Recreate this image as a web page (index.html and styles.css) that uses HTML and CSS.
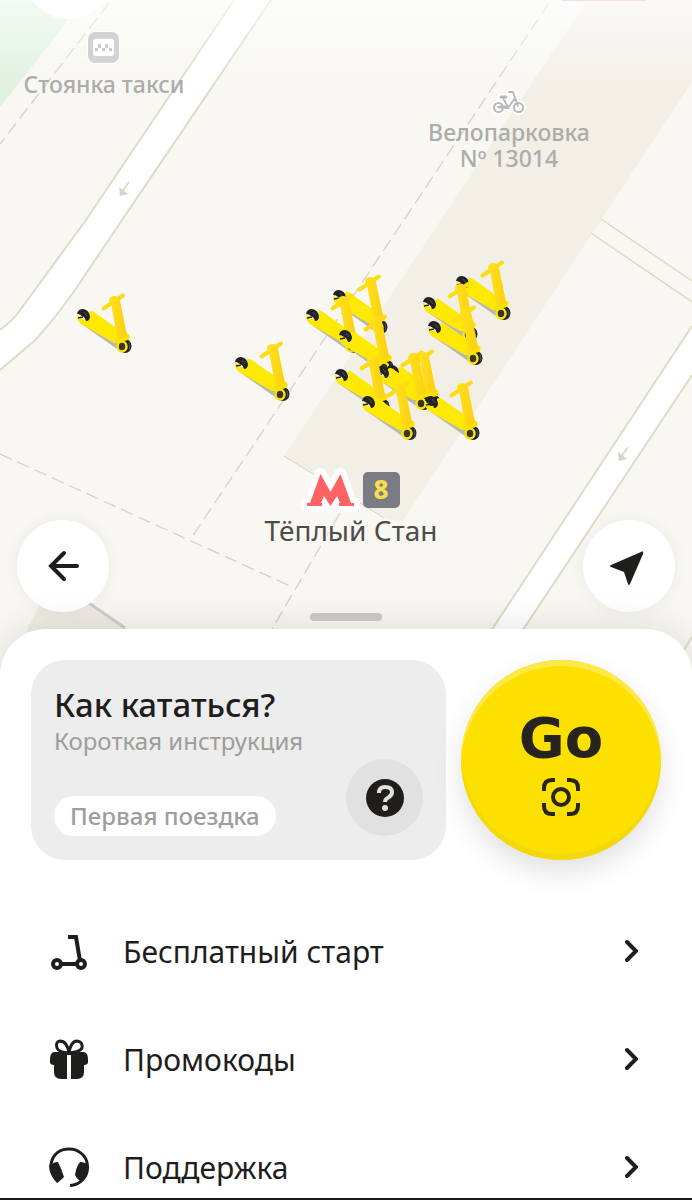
FILE: index.html
```html
<!DOCTYPE html>
<html lang="ru">
<head>
<meta charset="UTF-8">
<meta name="viewport" content="width=device-width, initial-scale=1.0">
<title>Самокаты</title>
<link rel="stylesheet" href="styles.css">
</head>
<body>
<main class="app">
  <section class="map">
    <svg class="map-canvas" viewBox="0 0 692 675" role="img" aria-label="Карта самокатов">
      <defs>
        <linearGradient id="fade" x1="0" y1="0" x2="0" y2="1">
          <stop offset="0" stop-color="#fff" stop-opacity="0.65"/>
          <stop offset="1" stop-color="#fff" stop-opacity="0"/>
        </linearGradient>
        <linearGradient id="stem" x1="0" y1="0" x2="1" y2="0">
          <stop offset="0" stop-color="#ffe21a"/>
          <stop offset="1" stop-color="#fccf12"/>
        </linearGradient>
        <g id="scooter">
          <path d="M3 33L40 59L46 60L46 54L10 28Z" fill="#b9b8b0"/>
          <path d="M0 25Q3 26 5 29L11 29L12 22Q14 20 17 22L38 37L51 44Q54 47 51 50L40 53L37 53L4 34Q0 31 0 25Z" fill="#fdea00"/>
          <!-- rear wheel -->
          <path d="M0 24Q1 19 6 19Q12 20 13 26Q13 31 9 31Q8 27 5 26Q3 24 0 24Z" fill="#222"/>
          <path d="M1 28L6 27" stroke="#222" stroke-width="1.500"/>
          <path d="M7 22L10 26" stroke="#55534a"/>
          <!-- front wheel -->
          <ellipse cx="48" cy="56" rx="6.500" ry="7" fill="#222"/>
          <ellipse cx="45" cy="56.500" rx="4.500" ry="5" fill="#3a3718" stroke="#f8e416" stroke-width="2.500"/>
          <path d="M52 52L53 60" stroke="#55534a"/>
          <!-- stem and handlebar -->
          <path d="M26.500 18.500L46 5.500" stroke="#fddc14" stroke-width="4" stroke-linecap="round"/>
          <path d="M32 11Q32 6 38 6Q43 7 43 11L50 45Q51 50 46 50Q41 51 40 46L34 14Z" fill="url(#stem)"/>
          <path d="M38 48Q45 51 52 44Q54 51 47 51Q42 53 38 51Z" fill="#fde000"/>
        </g>
        <g id="arrow">
          <path d="M129 182L122 192" stroke="#d9d5c3" stroke-width="1.500"/>
          <path d="M119 187L120 196L128 194Z" fill="#d9d5c3"/>
        </g>
      </defs>

      <rect width="692" height="675" fill="#f8f7f1"/>
      <path d="M0 0H84L0 107Z" fill="#dff1df"/>

      <!-- buildings -->
      <path d="M587 0H692V82L402 522L384 518L284 456Z" fill="#f2efe7"/>
      <path d="M26 632L42 600H84L128 632Z" fill="#eeece3"/>
      <path d="M86 601L125 628" stroke="#cfcec8" stroke-width="3"/>
      <path d="M284 456L384 518" stroke="#d5d2c8"/>

      <!-- roads -->
      <path d="M234 0L86 220L18 313Q12 321 0 330V370L33 342Q50 325 75 290L122 220L271 0Z" fill="#fff"/>
      <path d="M692 326L462 675H493L692 375Z" fill="#fff"/>
      <g fill="none" stroke="#dedbc9" stroke-width="2">
        <path d="M234 0L86 220L18 313Q12 321 0 330"/>
        <path d="M271 0L122 220L75 290Q50 325 33 342L0 370"/>
        <path d="M692 326L462 675M692 375L493 675"/>
        <path d="M692 637L668 675"/>
      </g>
      <path d="M601 219L692 281M591 233L692 302" fill="none" stroke="#dedbc9" stroke-width="1.500"/>
      <g fill="none" stroke="#d3d2cc" stroke-width="1.300" stroke-dasharray="13 6">
        <path d="M109 3L0 144"/>
        <path d="M549 3L190 540"/>
        <path d="M0 454L290 586"/>
        <path d="M340 513L245 675"/>
      </g>
      <use href="#arrow"/>
      <use href="#arrow" x="499" y="265"/>
      <rect width="692" height="90" fill="url(#fade)"/>
      <rect x="562" width="84" height="1" fill="#f3dcf0"/>
      <circle cx="69" cy="-27" r="46" fill="#fff"/>

      <!-- taxi rank -->
      <rect x="87" y="31" width="33" height="33" rx="8" fill="#fff"/>
      <rect x="88" y="32" width="31" height="31" rx="7" fill="#d3d3d3"/>
      <rect x="93" y="39" width="21" height="17" rx="3" fill="#fff"/>
      <path d="M95 48h3v3h-3zM98 44h3v4h-3zM102 48h3v3h-3zM105 44h3v4h-3zM109 48h3v3h-3z" fill="#cdcdcd"/>
      <text class="place" x="104" y="93">Стоянка такси</text>

      <!-- bike parking -->
      <g fill="none" stroke-linecap="round" stroke-linejoin="round">
        <g stroke="#fff" stroke-width="6">
          <circle cx="498.500" cy="107.500" r="4.500"/>
          <circle cx="518.500" cy="107.500" r="4.500"/>
          <path d="M498 107L508 108L515 98L513 92H509M508 107L503 98M500 97H506M515 98L518 106"/>
        </g>
        <g stroke="#b9b9b9" stroke-width="2">
          <circle cx="498.500" cy="107.500" r="4.500"/>
          <circle cx="518.500" cy="107.500" r="4.500"/>
          <path d="M498 107L508 108L515 98L513 92H509M508 107L503 98M515 98L518 106"/>
          <path d="M501 97H506M500 107L508 107" stroke-width="3"/>
        </g>
      </g>
      <text class="place" x="509" y="141">Велопарковка<tspan x="509" dy="26">Nº 13014</tspan></text>

      <!-- scooters -->
      <use href="#scooter" x="77" y="290"/>
      <use href="#scooter" x="235" y="338"/>
      <use href="#scooter" x="456" y="257"/>
      <use href="#scooter" x="333" y="271"/>
      <use href="#scooter" x="423" y="278"/>
      <use href="#scooter" x="306" y="290"/>
      <use href="#scooter" x="428" y="302"/>
      <use href="#scooter" x="339" y="311"/>
      <use href="#scooter" x="386" y="346"/>
      <use href="#scooter" x="376" y="347"/>
      <use href="#scooter" x="335" y="350"/>
      <use href="#scooter" x="425" y="377"/>
      <use href="#scooter" x="362" y="377"/>

      <!-- metro station -->
      <path d="M307 506V503H310L320.500 474L330.500 492L340.500 474L351 503H354V506H339V503H340L337 496L330.500 506L324 496L321 503H322V506Z" fill="#ff6262" stroke="#fff" stroke-width="12" stroke-linejoin="round" paint-order="stroke"/>
      <rect x="363" y="472" width="37" height="36" rx="5" fill="#7a7b83"/>
      <text class="line-number" x="381" y="499">8</text>
      <text class="station" x="351" y="541">Тёплый Стан</text>
    </svg>

    <div class="map-controls">
      <button class="round-btn" type="button" aria-label="Назад">
        <svg width="32" height="32" viewBox="0 0 32 32" fill="none" stroke="#1f1e1c" stroke-width="4" stroke-linecap="round"><path d="M30 16H5M17 3L4 16L17 29"/></svg>
      </button>
      <button class="round-btn" type="button" aria-label="Моё местоположение">
        <svg width="40" height="40" viewBox="0 0 40 40"><path d="M2 19L32 6Q35 4 34 8L21 38Q20 40 19 38L15 26L2 21Q0 20 2 19Z" fill="#1f1e1c"/></svg>
      </button>
    </div>
  </section>

  <section class="sheet">
    <div class="handle"></div>
    <div class="actions">
      <button class="guide" type="button">
        <span class="guide-title">Как кататься?</span>
        <span class="guide-text">Короткая инструкция</span>
        <span class="guide-footer">
          <span class="tag">Первая поездка</span>
          <span class="help">
            <svg width="40" height="40" viewBox="0 0 40 40"><circle cx="20" cy="20" r="19" fill="#1f1e1c"/><path d="M14 15Q14 9 20 9Q27 9 27 14Q27 17 24 19Q20 21 20 24" fill="none" stroke="#e1e1e1" stroke-width="4"/><circle cx="20" cy="30" r="3" fill="#e1e1e1"/></svg>
          </span>
        </span>
      </button>
      <button class="go" type="button">
        <span class="go-text">Go</span>
        <svg width="40" height="40" viewBox="0 0 40 40" fill="none" stroke="#26241c" stroke-width="4"><circle cx="20" cy="20" r="8"/><path d="M3 14V11Q3 3 11 3H14M26 3H29Q37 3 37 11V14M37 26V29Q37 37 29 37H26M14 37H11Q3 37 3 29V26"/></svg>
      </button>
    </div>

    <nav class="menu">
      <a class="menu-item" href="#start">
        <svg class="menu-icon" viewBox="0 0 40 40" fill="none" stroke="#1f1e1c"><g stroke-width="4"><path d="M19 6H27L31 30"/><path d="M12 33H28"/></g><circle cx="8" cy="33" r="4" stroke-width="4"/><circle cx="32" cy="33" r="4" stroke-width="4"/></svg>
        <span class="menu-label">Бесплатный старт</span>
        <svg class="chevron" viewBox="0 0 14 24"><path d="M3 3L12 12L3 21"/></svg>
      </a>
      <a class="menu-item" href="#promo">
        <svg class="menu-icon" viewBox="0 0 40 40"><path d="M20 14Q18 2 11 2Q6 3 8 9Q9 13 20 14Q31 13 33 9Q34 3 28 2Q22 2 20 14Z" fill="none" stroke="#1f1e1c" stroke-width="3"/><path d="M5 13H35Q39 14 39 20V23Q39 26 35 26V33Q35 40 28 40H22V16H18V40H12Q5 40 5 33V26Q1 26 1 23V20Q1 14 5 13Z" fill="#1f1e1c"/></svg>
        <span class="menu-label">Промокоды</span>
        <svg class="chevron" viewBox="0 0 14 24"><path d="M3 3L12 12L3 21"/></svg>
      </a>
      <a class="menu-item" href="#support">
        <svg class="menu-icon" viewBox="0 0 40 40"><path d="M7 32C2 26 1 21 2 17C4 7 11 2 20 2C30 2 38 9 38.500 19C39 30 31 38 21 38.500" fill="none" stroke="#1f1e1c" stroke-width="3"/><path d="M2 18Q4 15 9 15Q12 21 15 30Q10 35 8 36Q2 30 1 22Z" fill="#1f1e1c"/><path d="M39 18Q36 15 31 15Q27 20 26 28Q27 31 31 34L37 30Q40 24 39 18Z" fill="#1f1e1c"/></svg>
        <span class="menu-label">Поддержка</span>
        <svg class="chevron" viewBox="0 0 14 24"><path d="M3 3L12 12L3 21"/></svg>
      </a>
    </nav>
  </section>
</main>
</body>
</html>
```
FILE: styles.css
```css
* {
  box-sizing: border-box;
}
body {
  margin: 0;
  background-color: #fff;
  color: #1f1e1c;
  font-family: "Noto Sans", sans-serif;
}
button {
  border: 0;
  padding: 0;
  font: inherit;
  color: inherit;
  cursor: pointer;
}
svg {
  display: block;
}
.app {
  height: 100vh;
  overflow: hidden;
  border-bottom: 2px solid #1a1a1a;
}

/* Map */
.map {
  position: relative;
}
.map-canvas {
  width: 100%;
  height: auto;
}
.map-canvas text {
  text-anchor: middle;
}
.place {
  font-size: 23px;
  font-weight: 500;
  fill: #acacaa;
}
.station {
  font-size: 28px;
  fill: #4c4c4c;
  stroke: #f8f7f1;
  stroke-width: 3px;
  paint-order: stroke;
}
.line-number {
  font-size: 26px;
  font-weight: 800;
  fill: #f5df4d;
}
.map-controls {
  position: absolute;
  left: 0;
  right: 0;
  bottom: 63px;
  display: flex;
  justify-content: space-between;
  padding: 0 17px;
}
.round-btn {
  display: flex;
  align-items: center;
  justify-content: center;
  width: 92px;
  height: 92px;
  border-radius: 50%;
  background-color: #fff;
  box-shadow: 0 0 16px rgba(0, 0, 0, 0.06);
}

/* Bottom sheet */
.sheet {
  position: relative;
  margin-top: -46px;
  padding: 31px 31px 0;
  border-radius: 46px 46px 0 0;
  background-color: #fff;
  box-shadow: 0 0 40px rgba(0, 0, 0, 0.12);
}
.handle {
  position: absolute;
  top: -16px;
  left: 50%;
  width: 72px;
  height: 8px;
  margin-left: -36px;
  border-radius: 4px;
  background-color: #c5c4c0;
}
.actions {
  display: flex;
  gap: 15px;
}
.guide {
  display: flex;
  flex: 1;
  flex-direction: column;
  height: 200px;
  padding: 23px 23px 24px;
  border-radius: 34px;
  background-color: #ededed;
  text-align: left;
}
.guide-title {
  font-size: 33px;
  font-weight: 500;
  line-height: 44px;
}
.guide-text {
  color: #9e9d9b;
  font-size: 24px;
  line-height: 28px;
}
.guide-footer {
  display: flex;
  align-items: flex-end;
  justify-content: space-between;
  flex: 1;
}
.tag {
  padding: 0 16px;
  border-radius: 20px;
  background-color: #fff;
  color: #9e9d9b;
  font-size: 24px;
  font-weight: 500;
  line-height: 40px;
}
.help {
  display: flex;
  align-items: center;
  justify-content: center;
  width: 77px;
  height: 77px;
  border-radius: 50%;
  background-color: #e1e1e1;
}
.go {
  display: flex;
  flex-direction: column;
  align-items: center;
  justify-content: center;
  gap: 4px;
  width: 200px;
  height: 200px;
  border-radius: 50%;
  background-color: #fce000;
  box-shadow: inset 0 6px 0 #fde84a, inset 0 -6px 0 #f3d90c, 0 12px 28px rgba(0, 0, 0, 0.12);
}
.go-text {
  color: #26241c;
  font-family: "DejaVu Sans", sans-serif;
  font-size: 56px;
  font-weight: bold;
  line-height: 70px;
}

/* Menu */
.menu {
  padding-top: 37px;
}
.menu-item {
  display: flex;
  align-items: center;
  height: 108px;
  padding: 0 23px 0 18px;
  color: inherit;
  text-decoration: none;
}
.menu-icon {
  width: 40px;
  height: 40px;
}
.menu-label {
  flex: 1;
  margin-left: 34px;
  font-size: 30px;
}
.chevron {
  width: 14px;
  height: 24px;
  fill: none;
  stroke: #1f1e1c;
  stroke-width: 4;
  stroke-linecap: round;
}
```
